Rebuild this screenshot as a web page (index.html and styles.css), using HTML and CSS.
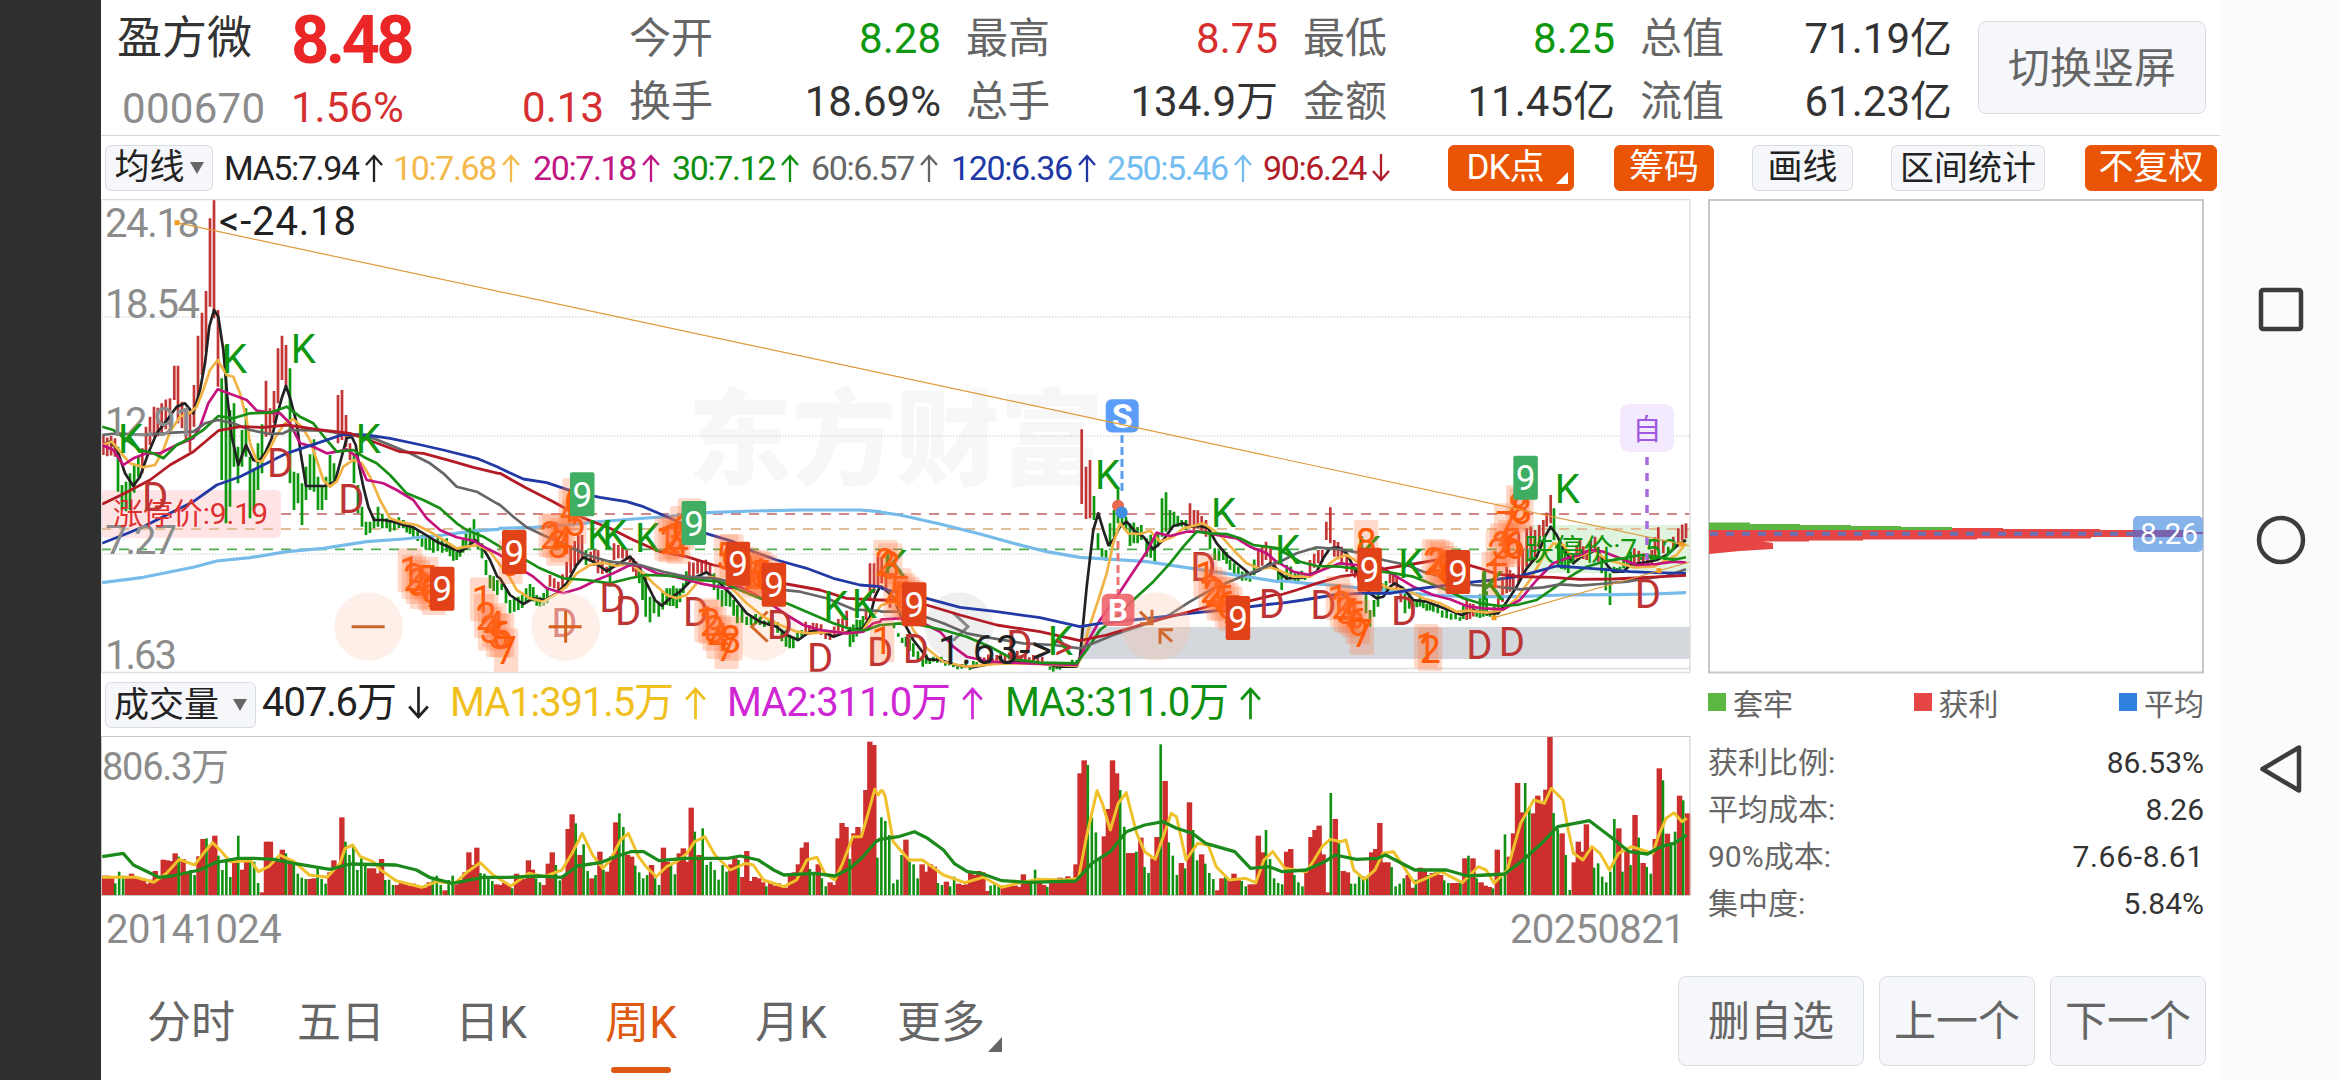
FILE: index.html
```html
<!DOCTYPE html>
<html lang="zh-CN">
<head>
    <meta charset="UTF-8">
    <meta name="viewport" content="width=device-width, initial-scale=1.0">
    <title>盈方微 000670</title>
    <link rel="stylesheet" href="styles.css">
</head>
<body>
    <div class="screen">
        <div class="notch"></div>
        <main class="main">
            <header class="quote">
                <div class="stock">
                    <div class="name">盈方微</div>
                    <div class="code">000670</div>
                </div>
                <div class="price">
                    <div class="last">8.48</div>
                    <div class="change"><span>1.56%</span><span>0.13</span></div>
                </div>
                <div class="stats">
                    <div class="stat"><label>今开</label><b class="down">8.28</b></div>
                    <div class="stat"><label>最高</label><b class="up">8.75</b></div>
                    <div class="stat"><label>最低</label><b class="down">8.25</b></div>
                    <div class="stat"><label>总值</label><b>71.19亿</b></div>
                    <div class="stat"><label>换手</label><b>18.69%</b></div>
                    <div class="stat"><label>总手</label><b>134.9万</b></div>
                    <div class="stat"><label>金额</label><b>11.45亿</b></div>
                    <div class="stat"><label>流值</label><b>61.23亿</b></div>
                </div>
                <button class="btn rotate">切换竖屏</button>
            </header>

            <div class="toolbar">
                <button class="btn select">均线<i class="caret"></i></button>
                <div class="ma-list">
                    <span class="ma w169 c-black">MA5:7.94<svg class="arrow"><use href="#up"/></svg></span>
                    <span class="ma w140 c-orange">10:7.68<svg class="arrow"><use href="#up"/></svg></span>
                    <span class="ma w139 c-pink">20:7.18<svg class="arrow"><use href="#up"/></svg></span>
                    <span class="ma w139 c-green">30:7.12<svg class="arrow"><use href="#up"/></svg></span>
                    <span class="ma w140 c-gray">60:6.57<svg class="arrow"><use href="#up"/></svg></span>
                    <span class="ma w156 c-blue">120:6.36<svg class="arrow"><use href="#up"/></svg></span>
                    <span class="ma w156 c-sky">250:5.46<svg class="arrow"><use href="#up"/></svg></span>
                    <span class="ma w140 c-red">90:6.24<svg class="arrow"><use href="#down"/></svg></span>
                </div>
                <div class="tools">
                    <button class="btn on dk">DK点<i class="corner"></i></button>
                    <button class="btn on chip">筹码</button>
                    <button class="btn draw">画线</button>
                    <button class="btn range">区间统计</button>
                    <button class="btn on adj">不复权</button>
                </div>
            </div>

            <div class="body">
                <section class="charts">
                    <svg class="kline" id="kline" viewBox="101 199 1590 475"></svg>
                    <div class="vol-head">
                        <button class="btn select vol">成交量<i class="caret"></i></button>
                        <span class="ma w188 c-black">407.6万<svg class="arrow"><use href="#down"/></svg></span>
                        <span class="ma w277 c-yellow">MA1:391.5万<svg class="arrow"><use href="#up"/></svg></span>
                        <span class="ma w278 c-purple">MA2:311.0万<svg class="arrow"><use href="#up"/></svg></span>
                        <span class="ma w278 c-green">MA3:311.0万<svg class="arrow"><use href="#up"/></svg></span>
                    </div>
                    <svg class="volume" id="volume" viewBox="101 736 1590 160"></svg>
                    <div class="dates"><span>20141024</span><span>20250821</span></div>
                </section>
                <aside class="chips">
                    <svg class="dist" viewBox="1708 199 496 475">
                        <rect x="1709" y="200" width="494" height="472.500" fill="#fff" stroke="#c8c8c8" stroke-width="2"/>
                        <path fill="#5cb642" d="M1709 522.500H1750V524H1800V525H1851V526H1901V527H1952V530H1709Z"/>
                        <path fill="#e64646" d="M1709 530H1952V528H2003V529H2100V530H2150V531.500H2203V533H2170V537H2091V538.500H1977V539.500H1863V540.500H1809V541.500H1763L1773 543V549L1740 551L1709 554Z"/>
                        <path d="M1710 533.700H2133" stroke="#6f6fb4" stroke-width="4" stroke-dasharray="8 8"/>
                        <rect x="2133" y="516" width="70" height="36" rx="5" fill="#86b2ea"/>
                        <path fill="#7a62ac" d="M2133 530H2185V532H2203V534H2185V537H2133Z"/>
                        <text class="t" x="2140" y="544" font-size="30" fill="#fff" textLength="58">8.26</text>
                    </svg>
                    <div class="legend">
                        <span><i class="lg-green"></i>套牢</span>
                        <span><i class="lg-red"></i>获利</span>
                        <span><i class="lg-blue"></i>平均</span>
                    </div>
                    <div class="row"><label>获利比例:</label><b>86.53%</b></div>
                    <div class="row"><label>平均成本:</label><b>8.26</b></div>
                    <div class="row"><label>90%成本:</label><b class="span">7.66-8.61</b></div>
                    <div class="row"><label>集中度:</label><b>5.84%</b></div>
                </aside>
            </div>

            <footer class="bottom">
                <nav class="tabs">
                    <a>分时</a>
                    <a>五日</a>
                    <a>日K</a>
                    <a class="active">周K</a>
                    <a>月K</a>
                    <a>更多<i class="corner"></i></a>
                </nav>
                <button class="btn big wide">删自选</button>
                <button class="btn big">上一个</button>
                <button class="btn big">下一个</button>
            </footer>
        </main>

        <div class="sysnav">
            <svg viewBox="0 0 120 1080" fill="none" stroke="#3c3c3c" stroke-width="4.500">
                <rect x="41" y="290" width="40" height="39" rx="2"/>
                <circle cx="61" cy="540" r="22"/>
                <path d="M42.500 769L79 747.500V790.500Z" stroke-linejoin="round"/>
            </svg>
        </div>
    </div>

    <svg width="0" height="0" class="defs">
        <symbol id="up" viewBox="0 0 18 28"><path d="M9 28V2M1 11L9 2L17 11" fill="none" stroke="currentColor" stroke-width="2.300"/></symbol>
        <symbol id="down" viewBox="0 0 18 28"><path d="M9 0V26M1 17L9 26L17 17" fill="none" stroke="currentColor" stroke-width="2.300"/></symbol>
    </svg>
    <script src="chart.js"></script>
</body>
</html>
```
FILE: styles.css
```css
* {
    box-sizing: border-box;
}

body {
    margin: 0;
    background: #fff;
    font-family: Roboto, "Noto Sans CJK SC", sans-serif;
    color: #333;
}

.screen {
    display: flex;
    width: 2340px;
    height: 1080px;
    overflow: hidden;
}

.notch {
    width: 101px;
    background: #2f2f2f;
}

.main {
    width: 2119px;
    display: flex;
    flex-direction: column;
}

.sysnav {
    width: 120px;
    background: #fbfbfb;
}

.sysnav svg {
    display: block;
    width: 120px;
    height: 1080px;
}

.defs {
    position: absolute;
}

b {
    font-weight: 400;
}

/* 按钮 */
.btn {
    display: flex;
    align-items: center;
    justify-content: center;
    position: relative;
    padding: 0;
    height: 46px;
    border: 1px solid #d9dde2;
    border-radius: 6px;
    background: #f6f7fa;
    color: #222;
    font-family: inherit;
    font-size: 35px;
    line-height: 1;
    white-space: nowrap;
}

.btn.on {
    background: #e95504;
    border-color: #e95504;
    color: #fff;
}

.caret {
    border: 7px solid transparent;
    border-top: 12px solid #666;
    border-bottom: 0;
    margin-left: 5px;
}

.corner {
    position: absolute;
    right: 5px;
    bottom: 6px;
    border-left: 12px solid transparent;
    border-bottom: 12px solid currentColor;
}

/* 行情 */
.quote {
    display: flex;
    height: 136px;
    padding-left: 16px;
    border-bottom: 1px solid #d5d5d5;
}

.stock {
    width: 174px;
}

.name {
    font-size: 45px;
    line-height: 77px;
}

.code {
    margin-left: 5px;
    font-size: 42px;
    line-height: 63px;
    letter-spacing: 0.3px;
    color: #8c8c8c;
}

.price {
    width: 313px;
    color: #d62f2f;
}

.last {
    font-size: 67px;
    font-weight: 700;
    letter-spacing: -3.7px;
    line-height: 81px;
    color: #ea2626;
}

.change {
    display: flex;
    justify-content: space-between;
    font-size: 42px;
    line-height: 54px;
}

.stats {
    display: grid;
    grid-template-columns: repeat(4, 312px);
    grid-auto-rows: 63px;
    column-gap: 25px;
    padding-top: 7px;
    margin-left: 25px;
}

.stat {
    display: flex;
    justify-content: space-between;
    font-size: 42px;
    line-height: 63px;
}

.stat label {
    color: #666;
}

.up {
    color: #d62f2f;
}

.down {
    color: #0f970f;
}

.rotate {
    width: 228px;
    height: 93px;
    margin: 21px 0 0 26px;
    padding-top: 2px;
    border-radius: 8px;
    font-size: 42px;
    color: #666;
}

/* 均线工具条 */
.toolbar {
    display: flex;
    align-items: center;
    height: 63px;
    padding-left: 4px;
}

.select {
    width: 108px;
}

.ma-list {
    display: flex;
    padding-left: 11px;
}

.ma {
    display: flex;
    align-items: center;
    flex: none;
    font-size: 34px;
    line-height: 46px;
    letter-spacing: -1.4px;
    white-space: nowrap;
}

.arrow {
    flex: none;
    width: 18px;
    height: 28px;
    margin-left: 6px;
}

.w139 { width: 139px; }
.w140 { width: 140px; }
.w156 { width: 156px; }
.w169 { width: 169px; }
.w188 { width: 188px; }
.w277 { width: 277px; }
.w278 { width: 278px; }

.c-black { color: #222; }
.c-orange { color: #f3b94a; }
.c-pink { color: #c01684; }
.c-green { color: #0f8f0f; }
.c-gray { color: #666; }
.c-blue { color: #2038a5; }
.c-sky { color: #74bdf0; }
.c-red { color: #b01c28; }
.c-yellow { color: #efc020; }
.c-purple { color: #cf27d3; }

.tools {
    display: flex;
    margin-left: 45px;
}

.dk {
    width: 126px;
    margin-right: 40px;
    padding-right: 12px;
    letter-spacing: -1px;
}

.chip {
    width: 100px;
    margin-right: 38px;
}

.draw {
    width: 101px;
    margin-right: 38px;
}

.range {
    width: 154px;
    margin-right: 40px;
    font-size: 34px;
}

.adj {
    width: 132px;
}

/* 图表区 */
.body {
    display: flex;
    height: 761px;
}

.charts {
    width: 1590px;
    margin-right: 17px;
}

.kline,
.volume,
.dist {
    display: block;
}

.kline {
    width: 1590px;
    height: 475px;
}

.volume {
    width: 1590px;
    height: 160px;
}

.t {
    font-family: Roboto, "Noto Sans CJK SC", sans-serif;
}

.vol-head {
    display: flex;
    align-items: center;
    height: 62px;
    padding-left: 4px;
}

.vol-head .ma {
    margin-top: -4px;
    font-size: 40px;
    letter-spacing: -1.1px;
}

.vol-head .arrow {
    width: 21px;
    height: 34px;
    margin-left: 12px;
}

.vol {
    width: 151px;
    margin-right: 6px;
}

.vol .caret {
    margin-left: 14px;
}

.dates {
    display: flex;
    justify-content: space-between;
    padding: 0 6px 0 5px;
    font-size: 40px;
    line-height: 67px;
    letter-spacing: -0.6px;
    color: #8c8c8c;
}

/* 筹码分布 */
.chips {
    width: 496px;
}

.dist {
    width: 496px;
    height: 475px;
}

.legend {
    display: flex;
    justify-content: space-between;
    height: 65px;
    padding-bottom: 10px;
    font-size: 30px;
    color: #666;
}

.legend span {
    display: flex;
    align-items: center;
}

.legend i {
    width: 18px;
    height: 18px;
    margin-right: 7px;
}

.lg-green { background: #5cb642; }
.lg-red { background: #e64646; }
.lg-blue { background: #3080e0; }

.row {
    display: flex;
    justify-content: space-between;
    font-size: 30px;
    line-height: 47px;
}

.row label {
    color: #666;
}

.row .span {
    letter-spacing: 0.7px;
}

/* 底部 */
.bottom {
    display: flex;
    align-items: center;
    height: 120px;
    padding: 1px 14px 0 15px;
}

.tabs {
    display: flex;
    margin-right: auto;
}

.tabs a {
    position: relative;
    width: 150px;
    padding-top: 4px;
    text-align: center;
    font-size: 44px;
    line-height: 106px;
    color: #666;
}

.tabs .active {
    color: #de5a12;
}

.tabs .active::after {
    content: "";
    position: absolute;
    left: 45px;
    bottom: 3px;
    width: 60px;
    height: 6px;
    border-radius: 3px;
    background: #de5a12;
}

.tabs .corner {
    right: 14px;
    bottom: 24px;
    border-left-width: 14px;
    border-bottom-width: 15px;
}

.big {
    width: 156px;
    height: 90px;
    margin-left: 15px;
    padding-top: 2px;
    border-radius: 8px;
    font-size: 42px;
    color: #666;
}

.wide {
    width: 186px;
}
```
FILE: chart.js
```javascript
const NS = 'http://www.w3.org/2000/svg';
const kline = document.getElementById('kline');
const volume = document.getElementById('volume');

// 四个分段的原点, 段内坐标为三倍
const SEG = { A: [90, 190], B: [500, 440], C: [880, 370], D: [1280, 440] };

function el(parent, tag, attrs, text) {
    const n = document.createElementNS(NS, tag);
    for (const k in attrs) n.setAttribute(k, attrs[k]);
    if (text !== undefined) n.textContent = text;
    parent.appendChild(n);
    return n;
}

function pos(s, x, y) {
    return [SEG[s][0] + x / 3, SEG[s][1] + y / 3];
}

function label(x, y, str, fill, size, len) {
    const a = { x, y, fill, 'font-size': size || 40, class: 't' };
    if (len) a.textLength = len;
    return el(kline, 'text', a, str);
}

function hline(y, x1, x2, color, dash, w) {
    el(kline, 'line', { x1, x2, y1: y, y2: y, stroke: color, 'stroke-width': w || 1.5, 'stroke-dasharray': dash || 'none' });
}

// 背景
el(kline, 'text', { x: 688, y: 477, 'font-size': 104, 'font-weight': 900, fill: '#f7f7f7', class: 't' }, '东方财富');
el(kline, 'rect', { x: 1080, y: 627, width: 610, height: 32, fill: '#d4d7dc' });
hline(668.5, 1080, 1690, '#dcdcdc');
[317, 436, 554].forEach(y => hline(y, 101, 1690, '#cccccc', '1.5 1.5', 1));
el(kline, 'rect', { x: 101, y: 490, width: 180, height: 48, rx: 5, fill: '#fee4e5' });
el(kline, 'rect', { x: 1525, y: 525, width: 165, height: 48, rx: 5, fill: '#e0f3de' });
hline(514, 281, 1690, '#d08787', '10 8', 1.8);
hline(529, 101, 1690, '#e0bd97', '10 8', 1.8);
hline(549.3, 101, 1525, '#4fae4f', '10 8', 1.8);

// 形态圆点
function disc(s, x, y, fill, d, stroke) {
    const [cx, cy] = pos(s, x, y);
    el(kline, 'circle', { cx, cy, r: 34.3, fill });
    el(kline, 'path', { d, transform: `translate(${cx} ${cy})`, fill: 'none', stroke, 'stroke-width': 3 });
}
disc('A', 836, 1310, '#fef0e8', 'M-17 0H16', '#c8642c');
disc('B', 785, 560, '#fef0e8', 'M6 -15L-10 0L6 15', '#d36b2c');
disc('C', 237, 770, '#efeff0', 'M-6 -14L9 0L-6 14', '#888');

// K线: x 最高 最低 颜色
const CANDLES = {
    A: '40 735 795 r,75 745 800 r,84 770 905 g,96 885 960 g,120 850 960 g,145 800 860 g,157 775 850 r,168 710 790 r,192 650 740 r,215 640 730 r,240 625 710 r,253 527 630 r,264 527 700 r,276 635 715 r,300 660 785 r,312 585 710 r,324 437 620 r,336 368 555 r,348 303 485 r,360 85 350 r,372 28 385 r,384 360 590 r,395 565 870 g,408 465 1000 g,420 660 950 g,432 640 830 g,444 770 880 g,456 720 830 g,468 655 800 g,480 800 985 g,492 835 960 g,504 760 900 g,516 703 850 g,528 572 740 r,540 655 735 r,552 603 700 r,564 475 640 r,576 437 570 r,588 465 590 r,600 535 880 g,612 845 960 g,624 850 940 g,636 880 1005 g,648 830 930 g,660 793 900 g,672 748 905 g,684 860 960 g,696 890 960 g,708 860 930 g,720 795 880 g,732 820 880 g,744 615 760 r,756 600 750 r,768 675 770 r,780 760 810 r,792 790 880 g,804 885 970 g,816 950 1010 g,828 995 1035 g,852 980 1015 g,864 950 1010 g,890 985 1015 g,900 990 1025 g,940 990 1015 g,970 1010 1040 g,996 1035 1070 g,1030 1050 1088 g,1070 1045 1085 g,1090 1080 1112 g,1110 1075 1100 g,1128 1030 1080 g,1152 988 1060 g,1176 1060 1105 g,1188 1110 1155 g,1200 1155 1195 g,1222 1170 1215 g',
    B: '5 430 450 g,18 445 490 g,30 480 520 g,55 470 510 g,90 432 480 g,120 470 500 g,142 440 490 g,150 405 440 r,175 425 450 r,200 365 420 r,212 320 400 r,224 303 380 r,246 285 360 r,258 330 375 g,272 335 360 r,294 330 400 r,320 380 400 r,330 360 440 g,342 310 360 r,355 315 355 r,380 330 360 r,400 355 395 r,418 390 430 g,437 400 530 g,450 470 547 g,462 470 520 g,476 485 530 g,500 445 495 g,530 445 505 g,550 430 460 g,568 365 410 r,605 360 400 r,630 375 410 r,642 400 450 g,666 450 500 g,690 455 500 g,712 495 550 g,740 530 555 g,780 530 555 g,820 540 560 g,858 570 620 g,880 590 625 g,905 570 590 g,917 545 580 r,950 550 580 r,990 570 600 r,1040 512 560 r,1050 560 620 g,1080 540 580 g,1098 500 540 r,1110 370 480 r,1122 370 460 r,1134 350 440 r',
    C: '5 560 640 r,18 600 660 r,42 760 775 g,55 790 800 g,78 800 830 g,100 820 860 g,128 860 890 g,160 860 875 g,220 880 892 g,270 885 900 g,300 860 875 r,400 850 870 r,460 855 880 r,500 875 885 g,520 890 905 g,550 880 890 g,590 870 890 g,605 178 402 r,618 290 447 r,630 270 445 r,642 378 450 g,654 490 538 g,666 535 560 g,678 540 572 g,690 460 530 g,702 420 500 g,714 350 460 g,726 400 460 g,738 440 480 g,750 460 528 g,784 465 510 g,800 505 560 g,824 500 575 g,834 490 530 g,846 385 500 g,858 367 485 g,870 420 480 g,882 425 470 g,905 450 470 g,918 450 480 g,930 400 465 r,942 420 480 r,965 438 480 r,978 450 500 r,990 480 538 g,1004 535 570 g,1030 540 570 g,1050 570 600 g,1075 590 625 g,1110 610 635 g,1135 535 600 r,1158 515 570 r,1185 570 600 r,1195 600 630 g',
    D: '5 400 450 g,20 375 420 g,45 400 425 g,75 400 420 g,90 360 400 r,115 330 370 r,127 330 365 r,139 245 300 r,151 202 310 r,163 300 350 r,185 320 370 r,200 350 395 r,215 370 400 r,245 400 440 g,258 460 520 g,270 510 560 g,282 480 530 g,294 460 500 g,306 430 460 g,330 400 430 r,350 410 450 r,375 460 520 g,400 480 500 g,430 480 505 g,460 490 515 g,500 510 535 g,540 530 542 g,560 480 540 r,590 510 530 g,610 400 530 g,630 515 530 g,655 475 520 r,680 380 460 r,700 400 450 r,716 280 430 r,728 330 410 r,740 265 380 r,765 270 360 r,790 240 290 r,800 218 260 r,812 165 250 r,822 205 300 g,835 310 380 g,865 350 400 g,880 340 370 r,900 300 350 r,920 330 360 r,945 290 330 r,965 350 400 g,990 400 495 g,1002 380 400 g,1020 380 395 g,1063 325 370 r,1090 340 375 r,1115 330 370 r,1135 262 330 r,1150 300 340 r,1165 320 340 g,1180 290 330 r,1195 265 310 r,1218 250 295 r'
};
for (const s in CANDLES) {
    const keys = CANDLES[s].split(',').map(k => k.split(' '));
    const paths = { r: '', g: '' };
    keys.forEach((k, i) => {
        const [x, hi, lo] = k.map(Number);
        const nx = keys[i + 1] ? keys[i + 1].map(Number) : [x + 1, hi, lo];
        const n = Math.max(1, Math.round((nx[0] - x) / 12));
        for (let j = 0; j < n; j++) {
            const f = j / n;
            const jit = j ? ((i * 7 + j * 13) % 5 - 2) * 4 : 0;
            const [px, y1] = pos(s, x + (nx[0] - x) * f, hi + (nx[1] - hi) * f + jit);
            const y2 = pos(s, 0, lo + (nx[2] - lo) * f + jit / 2)[1];
            paths[k[3]] += `M${px.toFixed(1)} ${y1.toFixed(1)}V${y2.toFixed(1)}`;
        }
    });
    el(kline, 'path', { d: paths.r, stroke: '#c23636', 'stroke-width': 2.7 });
    el(kline, 'path', { d: paths.g, stroke: '#0f970f', 'stroke-width': 2.7 });
}

// 均线
const LINES = [
    ['#77bbea', 3.2, {
        A: '36,1178 160,1162 310,1132 380,1113 480,1103 590,1085 700,1075 830,1055 940,1047 1060,1035 1160,1022 1225,1018',
        B: '0,265 100,262 200,255 300,245 400,237 500,230 620,218 760,213 900,210 1080,210 1140,215',
        C: '5,427 60,435 180,462 300,492 400,520 500,545 600,562 700,568 800,575 900,590 1000,605 1100,620 1195,635',
        D: '0,422 80,430 150,435 250,445 350,455 450,465 560,470 700,470 850,465 1000,464 1120,462 1218,458' }],
    ['#222', 2.7, {
        A: '36,765 60,755 80,775 105,850 130,888 150,860 175,790 200,730 235,685 260,650 285,640 310,670 330,600 345,520 358,410 372,360 385,380 400,480 412,620 425,740 445,825 468,765 490,810 505,815 525,790 545,745 560,680 575,625 588,588 602,630 620,700 632,790 648,888 705,888 735,875 755,800 770,745 785,740 797,765 808,830 820,890 835,950 852,990 880,990 910,995 940,1005 970,1012 1000,1030 1040,1055 1075,1070 1110,1085 1135,1070 1155,1050 1175,1068 1200,1110 1222,1160',
        B: '0,415 30,465 70,492 100,475 135,480 170,460 200,430 230,375 250,352 280,365 320,393 350,375 390,350 420,385 440,430 465,480 485,497 510,475 540,455 580,415 620,397 660,430 700,470 740,520 780,545 830,560 860,585 895,600 930,575 960,570 1000,590 1050,572 1090,565 1110,530 1125,470 1140,440',
        C: '5,650 40,680 65,745 100,810 145,868 180,870 230,885 280,892 330,882 400,875 480,880 540,890 590,890 600,860 620,650 640,480 655,430 670,480 685,525 700,510 720,470 740,455 765,485 790,500 820,538 850,510 880,468 910,460 930,470 960,468 985,475 1010,520 1040,555 1070,580 1110,612 1140,600 1170,580 1195,600',
        D: '0,400 20,415 70,412 110,395 130,355 150,325 175,322 200,340 220,380 245,420 270,460 290,475 310,470 330,440 345,430 370,445 400,480 440,485 480,500 520,515 545,525 580,510 620,520 655,520 680,485 710,440 740,385 770,350 795,290 812,260 830,285 850,325 880,370 910,345 950,330 985,380 1000,395 1030,395 1050,375 1090,368 1130,360 1160,345 1190,318 1218,300' }],
    ['#f2b344', 2.7, {
        A: '36,765 65,755 90,785 120,820 160,832 195,825 220,780 240,725 270,680 300,668 320,650 340,600 360,540 383,510 395,530 410,555 430,560 450,610 470,690 480,760 500,812 515,815 540,775 560,735 585,700 610,688 635,710 660,750 680,810 700,870 720,890 740,875 760,830 790,810 815,820 840,860 870,930 900,985 940,998 980,1005 1020,1025 1060,1050 1100,1075 1130,1070 1165,1065 1200,1085',
        B: '0,375 25,405 50,450 90,475 130,485 165,465 200,440 230,400 270,375 310,368 350,378 390,370 430,400 460,430 500,465 530,475 560,465 590,430 630,410 670,420 700,450 740,490 790,530 840,555 890,575 930,580 1000,575 1050,580 1090,570 1110,540 1140,500',
        C: '5,705 40,695 70,715 100,780 140,835 190,875 260,890 350,882 440,880 530,885 590,888 605,860 625,780 655,690 680,610 700,520 720,460 745,490 780,492 810,482 840,515 880,500 910,475 950,465 970,460 1000,480 1030,505 1065,545 1100,580 1140,597 1170,592 1195,600',
        D: '0,392 40,410 90,410 130,385 170,355 200,345 240,370 290,430 330,445 380,450 430,475 480,490 530,515 570,512 620,518 670,510 710,475 750,420 790,350 820,310 850,315 880,355 910,345 940,330 980,360 1020,370 1060,382 1120,380 1160,360 1190,345 1218,310' }],
    ['#c4127e', 2.7, {
        A: '36,765 70,780 100,825 130,805 170,790 210,790 260,765 310,745 330,710 355,640 383,598 430,615 470,630 500,662 540,668 570,670 600,700 630,760 670,770 710,790 740,785 770,778 800,800 830,870 880,880 920,900 970,930 1010,985 1050,1020 1100,1042 1150,1052 1190,1075',
        B: '0,345 50,380 100,410 140,445 190,460 240,445 290,420 340,400 390,375 430,380 470,400 530,412 600,430 680,445 720,440 760,460 810,490 860,525 910,555 960,570 1040,580 1090,575 1120,550 1140,545',
        C: '5,748 60,745 130,760 180,785 220,830 260,860 330,875 450,880 590,885 620,820 660,750 710,680 760,605 800,545 830,488 870,498 920,485 970,485 1010,495 1070,505 1110,530 1160,550 1195,580',
        D: '0,370 40,395 90,405 140,385 180,370 230,375 300,380 350,410 400,440 460,465 510,478 560,498 610,505 670,508 720,480 770,420 820,370 860,355 900,345 930,330 970,335 1020,355 1070,375 1130,372 1180,365 1218,368' }],
    ['#178f17', 2.7, {
        A: '36,710 70,720 110,750 150,780 190,790 220,805 260,765 300,745 340,720 385,678 430,685 480,670 540,668 590,650 630,680 670,700 710,750 740,785 790,780 820,800 860,820 900,855 950,910 1000,930 1050,955 1100,1000 1130,1020 1180,1040',
        B: '0,320 60,350 120,385 190,415 260,420 330,430 390,415 440,405 520,408 600,420 660,425 720,450 780,475 860,490 930,520 1000,550 1060,570 1100,570 1140,555',
        C: '5,765 60,760 120,765 190,780 260,800 330,830 400,868 480,878 590,880 620,840 660,780 710,740 760,690 820,635 870,580 910,530 950,485 990,490 1040,492 1080,505 1120,525 1195,535',
        D: '0,330 60,365 110,378 180,380 260,390 330,398 400,410 450,430 500,450 550,475 600,490 660,498 710,495 770,480 820,445 870,410 920,380 970,365 1030,355 1080,345 1130,350 1180,360 1218,352' }],
    ['#666', 2.7, {
        A: '36,735 80,730 160,735 250,728 310,725 345,700 383,690 430,700 480,720 540,732 580,730 600,720 700,722 780,735 850,745 900,765 960,790 1020,820 1060,850 1100,890 1160,905 1220,940',
        B: '0,195 40,230 80,262 140,290 200,315 260,345 330,365 420,375 490,395 560,410 640,415 720,430 800,445 900,455 980,475 1060,508 1140,513',
        C: '5,725 60,725 120,735 190,760 260,790 340,805 430,820 520,825 600,835 640,820 700,795 780,768 860,740 930,695 1000,655 1060,630 1120,605 1195,575',
        D: '0,365 50,340 110,322 180,328 250,340 310,360 380,375 430,395 500,415 580,435 650,440 720,448 790,442 840,433 900,437 960,432 1040,425 1100,415 1160,408 1218,388' }],
    ['#2139a5', 2.8, {
        A: '36,1060 100,1035 160,1010 240,970 310,935 380,885 450,860 520,825 590,790 680,760 760,733 830,735 900,745 980,762 1060,780 1160,805 1225,832',
        B: '0,85 70,117 140,128 220,155 300,172 380,185 430,200 500,230 600,275 700,305 760,335 830,360 920,385 1000,415 1080,435 1140,440',
        C: '5,655 80,675 140,685 240,712 350,725 480,743 600,770 660,760 760,750 850,740 950,728 1050,718 1150,705 1195,700',
        D: '0,490 70,480 160,465 240,460 330,460 400,448 480,438 560,428 640,420 720,408 780,392 830,378 900,383 970,388 1050,395 1120,398 1218,400' }],
    ['#b31a24', 2.8, {
        A: '36,943 100,912 180,870 240,825 310,785 385,722 450,710 520,712 590,705 680,718 780,730 850,755 930,785 1000,790 1080,812 1150,832 1225,850',
        B: '0,100 80,145 160,185 240,230 330,265 400,300 480,335 560,350 640,375 760,400 860,432 960,450 1040,475 1140,480',
        C: '5,690 80,692 140,705 240,735 350,765 480,785 600,812 680,795 770,768 850,745 930,725 1000,705 1100,695 1195,672',
        D: '0,465 50,450 110,430 180,410 250,400 320,385 400,372 480,358 530,365 600,385 650,402 720,410 820,412 900,418 1000,417 1100,412 1218,406' }]
];
LINES.forEach(([stroke, w, parts]) => {
    const pts = [];
    for (const s in parts) {
        parts[s].split(' ').forEach(p => {
            const [x, y] = p.split(',').map(Number);
            pts.push(pos(s, x, y).map(v => v.toFixed(1)).join(','));
        });
    }
    el(kline, 'polyline', { points: pts.join(' '), fill: 'none', stroke, 'stroke-width': w, 'stroke-linejoin': 'round' });
});

// 坐标文字
[['24.18', 237, 95], ['18.54', 318, 95], ['12.91', 436, 91], ['7.27', 554, 72], ['1.63', 669, 72]]
    .forEach(([s, y, len]) => label(105, y, s, '#8c8c8c', 40, len));
label(113, 524, '涨停价:9.19', '#e02f2f', 30, 155);
label(1524, 560, '跌停价:7.52', '#0f970f', 30, 154);

// K / D 信号
const SIGNALS = {
    A: 'K 396 548,K 602 518,K 84 788,K 797 790,D 156 962,D 531 860,D 745 970',
    B: 'K 261 328,K 307 328,K 405 335,K 1147 418,K 970 540,K 1055 535,D 154 592,D 298 515,D 345 555,D 549 558,D 800 596,D 921 697,D 1101 677,D 1208 670',
    C: 'K 645 358,K 993 472,K 1185 583,K 503 855,D 931 632,D 1136 745,D 379 868',
    D: 'K 824 188,K 228 375,K 355 415,K 597 480,D 91 538,D 333 555,D 559 658,D 656 648,D 1064 505'
};
for (const s in SIGNALS) {
    SIGNALS[s].split(',').forEach(item => {
        const [ch, x, y] = item.split(' ');
        label(...pos(s, +x, +y), ch, ch === 'K' ? '#0f970f' : '#bd3434');
    });
}
disc('B', 197, 560, 'rgba(253,226,210,.5)', 'M-17 0H16M0 -16V16', '#d3601c');
disc('C', 828, 770, 'rgba(250,190,160,.28)', 'M-16 -15L-4 -3M-4 -17V-3H-16M16 15L4 4M4 17V3H17', '#d06a30');

// 九转序列
const TAGS = {
    A: '1 923 1075,2 935 1095,3 947 1110,4 960 1125,5 972 1100,6 985 1130,7 995 1143,1 1140 1162,2 1152 1212,3 1164 1250,4 1176 1240,5 1188 1270,6 1200 1270,7 1212 1315,8 1225 1050',
    B: '2 115 220,1 127 222,3 139 245,4 151 235,4 175 145,5 187 180,6 187 115,1 463 230,2 475 235,3 487 225,4 499 240,6 510 198,8 533 175,5 642 283,6 658 283,4 700 320,1 712 330,2 725 340,4 735 330,5 745 335,6 760 345,1 583 475,2 595 480,3 607 500,4 619 525,7 643 555,8 655 530,2 1120 300,3 1134 310,4 1150 400,5 1162 385,6 1174 400,7 1186 410,8 1195 420,1 1110 535',
    C: '1 940 550,2 955 590,2 968 600,4 980 620,5 992 620,6 1004 640,7 1015 650',
    D: '8 222 240,1 137 408,2 149 430,3 161 445,4 173 450,5 185 460,6 197 480,7 209 512,2 425 297,3 437 300,4 449 305,5 461 318,6 472 330,1 402 552,2 414 562,1 605 335,2 617 270,3 630 250,7 642 190,5 655 240,6 667 250,8 678 135,8 688 145'
};
for (const s in TAGS) {
    TAGS[s].split(',').forEach(item => {
        const [n, tx, ty] = item.split(' ');
        const [x, y] = pos(s, +tx, +ty);
        el(kline, 'rect', { x, y, width: 24.3, height: 44, rx: 2, fill: '#ff7038', 'fill-opacity': .26 });
        label(x + 1.5, y + 36, n, '#ff5a08', 38);
    });
}
[['A', 1020, 1130], ['A', 1236, 1020], ['B', 210, 97, 1], ['B', 545, 183, 1], ['B', 677, 305], ['B', 785, 368],
 ['B', 1206, 427], ['C', 1037, 678], ['D', 232, 323], ['D', 497, 330], ['D', 700, 47, 1]].forEach(([s, tx, ty, green]) => {
    const [x, y] = pos(s, tx, ty);
    el(kline, 'rect', { x, y, width: 24.5, height: 44, rx: 2, fill: green ? '#3fae63' : '#e14218' });
    label(x + 2.5, y + 34.5, '9', '#fff', 35);
});

// 买卖点
function vdash(x, y1, y2, stroke) {
    el(kline, 'line', { x1: x, x2: x, y1, y2, stroke, 'stroke-width': 3, 'stroke-dasharray': '8 4' });
}
vdash(1122, 435, 491, '#5c9dee');
vdash(1118, 541, 593, '#ee7570');
el(kline, 'circle', { cx: 1118, cy: 505.7, r: 6, fill: '#e8694f' });
el(kline, 'circle', { cx: 1121.7, cy: 512.6, r: 6, fill: '#3d8de0' });
el(kline, 'rect', { x: 1105.7, y: 399.3, width: 33, height: 33.3, rx: 6, fill: '#5c9dfa' });
el(kline, 'text', { x: 1122.3, y: 428, 'font-size': 34, 'font-weight': 700, fill: '#fff', 'text-anchor': 'middle', class: 't' }, 'S');
el(kline, 'rect', { x: 1101.7, y: 593.7, width: 32.7, height: 32.3, rx: 6, fill: '#f0646a', 'fill-opacity': .9 });
el(kline, 'text', { x: 1118, y: 621, 'font-size': 31, 'font-weight': 700, fill: '#fff', 'text-anchor': 'middle', class: 't' }, 'B');
el(kline, 'rect', { x: 1620, y: 404, width: 54, height: 48, rx: 9, fill: '#f3eafd' });
el(kline, 'text', { x: 1647, y: 440, 'font-size': 29, fill: '#9f58e0', 'text-anchor': 'middle', class: 't' }, '自');
el(kline, 'line', { x1: 1647, x2: 1647, y1: 457, y2: 560, stroke: '#a56ade', 'stroke-width': 3.5, 'stroke-dasharray': '8 8' });

label(219, 235, '<-24.18', '#222', 40, 137);
label(938, 664, '1.63->', '#222', 40, 114);
label(1054, 659, '>', '#bd3434', 36);

// 趋势线
el(kline, 'path', { d: 'M177 222.700L1690 546M1494 617.700L1690 562', fill: 'none', stroke: '#df9a3a', 'stroke-width': 1.2 });
[[177, 222.7], [1494, 617.7], [1659, 570.7], [1681, 544]].forEach(([x, y]) =>
    el(kline, 'rect', { x: x - 2.5, y: y - 2.5, width: 5, height: 5, fill: '#f09a22' }));

el(kline, 'rect', { x: 101.5, y: 199.5, width: 1588.5, height: 473, fill: 'none', stroke: '#dedede', 'stroke-width': 1.5 });

// 成交量
const VOL = [
    [101, 887, 'r58 r58 r56 g35 g70 g58 r56 r64 r52 r48 r44 r34 r46 r72 r58 r106 r104 r102 r125 g115 r108 r70 g75 g60 r116 r168 g170 r150 r178 g118 g75 g105 g54 r102 g178 r76 r108 g112 g100 g36 r8 r160 r160 r110 r108 r136 g125 r105 g102 g64 g52 g48 r48 r50 g80 g48 g34 r68 r104 r85 r233 g160 g120 g145 g75 g110 g90 r80 r80 r65 r108 g45 g46 g30 r30 r38 r32 r28 r34 r26 r24 r22 r38 g44 g58 g30 r14 g45 g58 r32 r45 r68 r128 r90 r142 g66 g64 g50 g42 r32 r30 r36 r28 g20 r64 r50 r48 r104 r76 g50 g38 r30 r94 r128 g90 g44 r60 r198 r242 g215 r120 g152 g72 r50 g60 r130 g75 r70 r116 r218 g245 g204 r120 r115 g88 g68 g50 g60 r90 g50 g30 r142 r100 g90 g62 r125 r140 r100 r262 g190 r120 g200 g90 g100 g75 g46 g90 g70 r92 r110 g105 r54 r132 r42 r54 r50 r38 g26 r36 r28 r35 r26 r22 r62 r68 r92 r142 r158 g78 g60 r92 g50 g26 r38 r30 r170 r216 r204 g108 r185 r204 r180 r315 r460 r450 g112 g233 g222'],
    [887, 1689, 'g180 g35 g46 g120 r166 g100 g92 g50 r92 r70 r92 r85 g36 g30 r40 g26 g55 r34 r30 r32 r68 r60 r72 r68 r12 g28 g34 g26 r28 r24 r30 r28 r24 r62 r40 g42 g76 r40 r30 g24 r46 r48 r52 r50 r56 r44 r92 r365 r404 g390 g232 g188 g110 r176 r258 r404 r365 g315 g205 r126 r126 g130 r172 g84 g66 r110 r174 g452 r342 g158 g118 g60 r96 g80 r278 g195 g104 r122 g94 g66 g48 r14 r50 g55 r48 r64 r50 g42 g26 r32 r32 r178 r128 g195 g108 g50 g36 g32 r130 r138 g60 g38 g26 r70 r174 r195 r208 r122 r8 g306 r228 g155 r72 r68 g34 g34 g56 g56 g55 r128 r138 r216 r98 r98 g84 g26 g34 g50 r60 r22 g46 r82 r72 g60 r66 r68 r60 g44 g36 r36 r36 g40 r110 g118 r110 g50 r38 r28 r24 g20 r136 g60 g182 r115 r185 r336 r248 g336 g265 r245 r298 r280 r316 r474 g246 g200 r185 g120 g15 r98 r160 r130 r212 r140 g82 g95 g55 g38 g70 g228 r200 g70 r132 g90 r240 g172 r96 g84 g64 r168 r380 g344 r184 g158 g190 r298 g284 r245']
];
VOL.forEach(([x0, x1, data]) => {
    const bars = data.split(' ');
    const step = (x1 - x0) / bars.length;
    bars.forEach((b, i) => {
        const red = b[0] === 'r';
        const h = b.slice(1) / 3;
        el(volume, 'rect', { x: x0 + i * step + (red ? 0 : 1), y: 895 - h, width: red ? step + 1.4 : 2.6, height: h, fill: red ? '#cd2e2e' : '#129012' });
    });
});
const VLINES = [
    ['#efc12a', 3,
        '24,622 60,622 90,622 125,637 150,610 175,568 205,585 225,545 240,518 255,540 275,575 315,572 330,605 350,590 372,555 400,575 430,615 465,622 490,580 500,535 515,525 530,560 555,575 570,600 600,632 650,652 680,635 715,640 740,605 765,578 790,615 825,648 860,610 890,620 925,600 945,550 965,490 985,555 1005,595 1020,570 1040,510 1055,490 1075,560 1090,590 1110,620 1130,590 1150,575 1170,550 1185,515 1205,500 1225,555 1255,600 1285,580 1300,585 1320,630 1360,650 1385,630 1405,570 1425,562 1440,610 1460,630 1475,580 1495,500 1512,500 1525,430 1538,358 1545,375 1550,362',
        '5,362 10,380 25,515 55,570 80,570 120,615 160,638 195,622 230,652 260,640 300,628 350,630 375,625 390,500 410,362 420,400 435,480 450,400 465,368 485,490 500,545 520,568 535,500 550,430 560,440 578,570 600,520 620,525 635,590 660,630 690,625 710,638 725,570 742,545 765,595 805,605 820,570 835,530 850,508 870,515 880,510 895,600 915,628 935,600 950,550 970,545 985,580 1010,640 1060,605 1100,638 1130,590 1145,600 1160,640 1185,600 1210,460 1235,390 1255,400 1268,355 1290,390 1300,480 1310,550 1328,570 1345,530 1360,550 1378,600 1395,550 1420,530 1460,550 1470,500 1485,445 1500,428 1515,455 1524,445'],
    ['#1c8a1c', 3.3,
        '24,560 65,550 85,585 135,622 160,618 215,600 245,578 290,565 320,565 360,568 400,580 470,598 510,582 600,585 640,600 665,622 710,640 770,622 820,622 880,618 925,622 955,588 1000,578 1030,560 1060,545 1085,545 1115,572 1165,565 1200,565 1250,565 1275,558 1310,570 1340,600 1360,615 1420,610 1460,618 1490,595 1515,560 1540,515',
        '0,508 35,500 65,485 90,505 120,540 140,580 165,605 190,610 230,632 280,637 370,633 400,580 435,545 465,485 500,465 535,455 560,475 590,490 615,520 670,545 700,595 735,590 760,605 805,600 840,575 860,555 900,568 940,565 955,555 1010,600 1070,600 1110,618 1180,612 1215,570 1250,520 1280,470 1340,452 1380,500 1415,545 1450,552 1475,530 1500,520 1524,495']
];
VLINES.forEach(([stroke, w, left, right]) => {
    const conv = (str, ox, k) => str.split(' ').map(p => {
        const [x, y] = p.split(',').map(Number);
        return (ox + x / k).toFixed(1) + ',' + (670 + y / 3).toFixed(1);
    }).join(' ');
    el(volume, 'polyline', { points: conv(left, 90, 1.96) + ' ' + conv(right, 880, 1.889), fill: 'none', stroke, 'stroke-width': w, 'stroke-linejoin': 'round' });
});
el(volume, 'rect', { x: 101.5, y: 736.5, width: 1588.5, height: 159, fill: 'none', stroke: '#c8c8c8' });
el(volume, 'text', { x: 102, y: 780, 'font-size': 38, fill: '#8c8c8c', textLength: 127, class: 't' }, '806.3万');
```
